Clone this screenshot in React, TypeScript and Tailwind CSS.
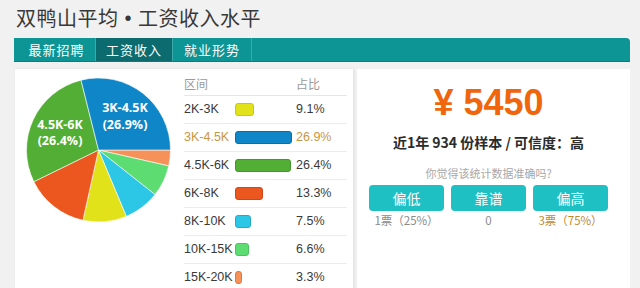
import React from "react";

const CJK = '"Noto Sans CJK SC", "Noto Sans", sans-serif';
const ARIAL = '"Liberation Sans", "Noto Sans CJK SC", sans-serif';

type Row = { label: string; pct: number; color: string; border: string };

const rows: Row[] = [
  { label: "2K-3K", pct: 9.1, color: "#e1e21a", border: "#c9c915" },
  { label: "3K-4.5K", pct: 26.9, color: "#0f86c8", border: "#0b70a8" },
  { label: "4.5K-6K", pct: 26.4, color: "#52ae34", border: "#44962a" },
  { label: "6K-8K", pct: 13.3, color: "#ec561f", border: "#cf4817" },
  { label: "8K-10K", pct: 7.5, color: "#2cc6e6", border: "#20acc9" },
  { label: "10K-15K", pct: 6.6, color: "#5ddc72", border: "#4cc360" },
  { label: "15K-20K", pct: 3.3, color: "#f7915a", border: "#e07a45" },
];

const pieOrder = [6, 5, 4, 0, 3, 2, 1];

function Pie() {
  const cx = 72.5;
  const cy = 72;
  const r = 72;
  const total = rows.reduce((s, x) => s + x.pct, 0);
  let a = 90;
  const pt = (deg: number) => {
    const t = (deg * Math.PI) / 180;
    return [cx + r * Math.sin(t), cy - r * Math.cos(t)];
  };
  const paths = pieOrder.map((i) => {
    const sweep = (rows[i].pct / total) * 360;
    const [x1, y1] = pt(a);
    const [x2, y2] = pt(a + sweep);
    a += sweep;
    const large = sweep > 180 ? 1 : 0;
    return (
      <path
        key={i}
        d={`M${cx},${cy} L${x1},${y1} A${r},${r} 0 ${large} 1 ${x2},${y2} Z`}
        fill={rows[i].color}
        stroke="#ffffff"
        strokeWidth={0.6}
      />
    );
  });
  return (
    <svg width="145" height="145" viewBox="0 0 145 145">
      {paths}
      <g
        fill="#ffffff"
        fontFamily='"Open Sans", sans-serif'
        fontWeight="bold"
        fontSize="12.5"
        textAnchor="middle"
      >
        <text x="99" y="34">3K-4.5K</text>
        <text x="99" y="50.5">(26.9%)</text>
        <text x="34" y="51">4.5K-6K</text>
        <text x="34" y="67">(26.4%)</text>
      </g>
    </svg>
  );
}

export default function App() {
  return (
    <div
      className="w-[640px] h-[288px] bg-[#f1f1f1] overflow-hidden"
      style={{ fontFamily: CJK }}
    >
      <div className="pl-[16px] pt-[6px] h-[30px] text-[20px] leading-[24px] text-[#383838] tracking-[0.5px] flex">
        <span>双鸭山平均</span>
        <span className="mx-[6px]" style={{ fontFamily: ARIAL }}>•</span>
        <span>工资收入水平</span>
      </div>
      <div className="ml-[14px] mt-[8px] w-[616px] h-[24px] bg-[#0d9494] rounded-tr-[4px] border-b border-[#0a7d7d] flex text-white text-[13px] tracking-[1px]">
        <div className="w-[82px] flex items-center justify-center pl-[4px] border-r border-[#3aa9a9]">
          最新招聘
        </div>
        <div className="w-[77px] flex items-center justify-center bg-[#0b6b6e] border-r border-[#3aa9a9]">
          工资收入
        </div>
        <div className="w-[79px] flex items-center justify-center border-r border-[#3aa9a9]">
          就业形势
        </div>
      </div>
      <div className="flex mt-[7px] ml-[15px] gap-[4px] h-[230px]">
        <div className="w-[338px] bg-white flex shadow-[1px_0_3px_rgba(0,0,0,0.08)]">
          <div className="pl-[11px] pt-[9px]">
            <Pie />
          </div>
          <div className="ml-[13px] w-[163px]" style={{ fontFamily: ARIAL }}>
            <div
              className="h-[27px] pt-[3px] flex items-center border-b border-[#e6e6e6] text-[12px] text-[#9a9a9a]"
              style={{ fontFamily: CJK }}
            >
              <div className="w-[112px]">区间</div>
              <div>占比</div>
            </div>
            {rows.map((r, i) => (
              <div
                key={r.label}
                className={`h-[28px] flex items-center border-b border-[#ececec] text-[12.5px] ${
                  i === 1 ? "text-[#c9963f]" : "text-[#3a3a3a]"
                }`}
              >
                <div className="w-[51px]">{r.label}</div>
                <div className="w-[61px] flex">
                  <div
                    className="h-[13px] rounded-[3px] border"
                    style={{
                      width: `${Math.round(r.pct * 2.13)}px`,
                      background: r.color,
                      borderColor: r.border,
                    }}
                  />
                </div>
                <div>{r.pct.toFixed(1)}%</div>
              </div>
            ))}
          </div>
        </div>
        <div className="w-[273px] bg-white flex flex-col items-center pr-[10px]">
          <div
            className="mt-[14px] h-[40px] text-[36px] leading-[40px] font-bold text-[#f0660c]"
            style={{ fontFamily: ARIAL }}
          >
            ¥ 5450
          </div>
          <div className="mt-[9px] h-[20px] text-[14px] leading-[20px] font-bold text-[#2b2b2b]">
            近1年 934 份样本 / 可信度：高
          </div>
          <div className="mt-[13px] h-[16px] text-[11px] leading-[16px] text-[#a8a8a8]">
            你觉得该统计数据准确吗?
          </div>
          <div className="mt-[4px] flex gap-[7px]">
            {["偏低", "靠谱", "偏高"].map((t) => (
              <div
                key={t}
                className="w-[75px] h-[26px] rounded-[4px] bg-[#1fc0c4] text-white text-[14px] flex items-center justify-center"
              >
                {t}
              </div>
            ))}
          </div>
          <div className="mt-[1px] flex gap-[7px] text-[11.5px] leading-[16px]">
            <div className="w-[75px] text-center text-[#8a8a8a]">1票（25%）</div>
            <div className="w-[75px] text-center text-[#8a8a8a]">0</div>
            <div className="w-[75px] text-center text-[#c08a2e]">3票（75%）</div>
          </div>
        </div>
      </div>
    </div>
  );
}
